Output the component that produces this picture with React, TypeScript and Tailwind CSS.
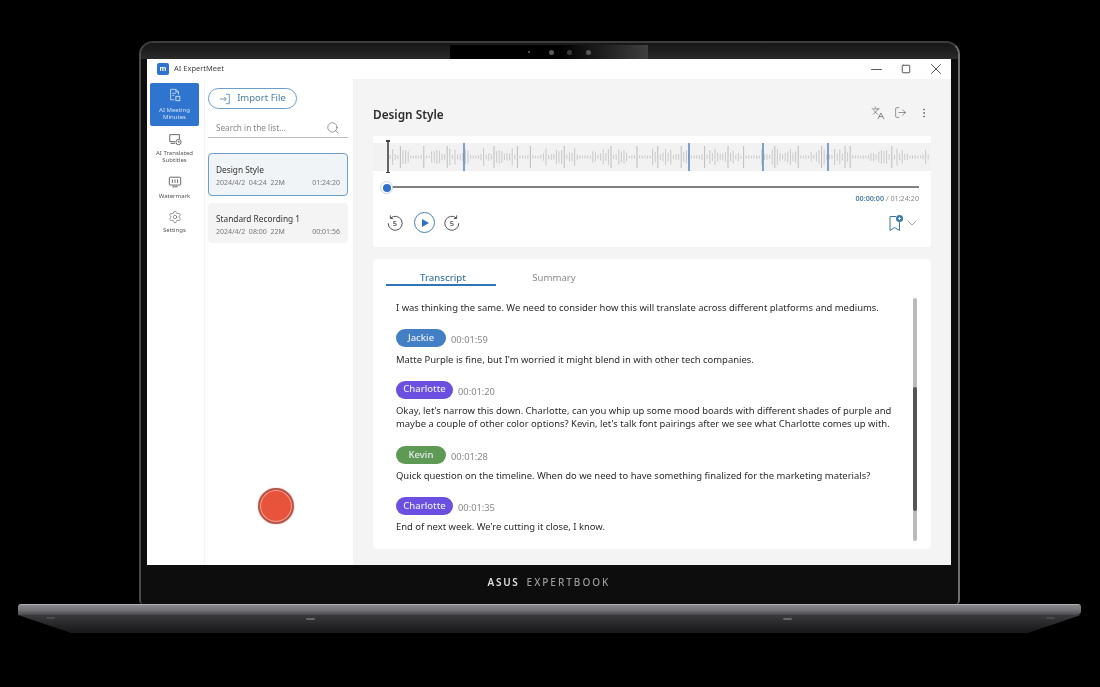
import React from "react";
import { Search, X, Minus, Square, Languages, LogOut, MoreVertical, ChevronDown, Settings } from "lucide-react";

const font = "font-['Noto_Sans','Open_Sans',sans-serif]";

function Wave() {
  const bars: React.ReactNode[] = [];
  const W = 542;
  for (let i = 0; i < 208; i++) {
    const x = 1 + i * 2.6;
    const phase = (x + 12) % 110;
    const quiet = (phase > 32 && phase < 54) || (phase > 92 && phase < 104);
    const noise = Math.abs(Math.sin(i * 1.7) * Math.cos(i * 0.53));
    let h = quiet ? 1.2 + noise * 0.8 : 2 + noise * 7;
    const tall = i % 9 === 4 && !quiet;
    if (tall || i % 41 === 13) h = 11;
    bars.push(
      <line key={i} x1={x} x2={x} y1={14 - h} y2={14 + h} stroke={tall || i % 41 === 13 ? "#a8a8a8" : "#b9b9b9"} strokeWidth="0.7" />,
    );
  }
  return (
    <svg viewBox={`0 0 ${W} 28`} className="h-[28px] w-[542px]">
      {bars}
      {[75, 300, 374, 439].map((x) => (
        <line key={x} x1={x} x2={x} y1="0" y2="28" stroke="#4a7fc0" strokeWidth="1.4" />
      ))}
    </svg>
  );
}

function SkipIcon({ flip }: { flip?: boolean }) {
  return (
    <svg viewBox="0 0 18 18" className="h-[18px] w-[18px]" fill="none" stroke="#555" strokeWidth="1">
      <g transform={flip ? "translate(18 0) scale(-1 1)" : undefined}>
        <path d="M4.6 4A7 7 0 1 1 2.2 9.2" />
        <path d="M4.4 1.4 4.2 4.4 7.2 4.6" />
      </g>
      <text x="9" y="12" textAnchor="middle" fontSize="7.5" fontWeight="600" fill="#555" stroke="none" fontFamily="Noto Sans">5</text>
    </svg>
  );
}

function NavItem({ label, icon, active, className }: { label: string[]; icon: React.ReactNode; active?: boolean; className?: string }) {
  return (
    <div className={`flex w-[49px] flex-col items-center rounded-[2px] ${active ? "h-[43px] bg-[#2f74cf] pt-[5px] text-[#cfe1f6]" : "text-[#555]"} ${className ?? ""}`}>
      {icon}
      <div className={`text-center text-[6px] leading-[7px] ${active ? "mt-[5px]" : "mt-[3.5px]"}`}>
        {label.map((l) => (
          <div key={l}>{l}</div>
        ))}
      </div>
    </div>
  );
}

function RecordingCard({ title, date, dur, active }: { title: string; date: string; dur: string; active?: boolean }) {
  return (
    <div className={`flex w-[140px] flex-col justify-center rounded-[4px] pt-[2px] ${active ? "h-[43px] border border-[#6c9ecb] bg-[#f1f4f7] pl-[7px] pr-[7px]" : "h-[40px] bg-[#f4f4f4] px-[8px]"}`}>
      <div className="text-[8.3px] leading-[13px] text-[#333]">{title}</div>
      <div className="mt-[1px] flex justify-between whitespace-pre text-[7px] leading-[11px] text-[#777]">
        <span>{date}</span>
        <span>{dur}</span>
      </div>
    </div>
  );
}

function Speaker({ name, time, color, width, mt, children }: { name: string; time: string; color: string; width: string; mt: string; children: React.ReactNode }) {
  return (
    <div className={mt}>
      <div className="flex h-[18px] items-center gap-[5px]">
        <div className={`flex h-[18px] items-center justify-center rounded-full text-[9.5px] font-medium text-[#e8ecf8] ${color} ${width}`}>{name}</div>
        <span className="pt-[4px] text-[9.3px] text-[#888]">{time}</span>
      </div>
      <div className="mt-[5.3px] whitespace-nowrap text-[9.45px] leading-[13.6px] text-[#2c2c2c]">{children}</div>
    </div>
  );
}

export default function App() {
  return (
    <div className={`flex h-[687px] w-[1100px] flex-col items-start overflow-hidden bg-black pt-[41px] ${font} blur-[0.35px]`}>
      {/* Lid */}
      <div className="relative ml-[139px] flex h-[563px] w-[821px] flex-col rounded-t-[14px] rounded-b-[4px] border-x-[2px] border-t-[2px] border-l-[#4a4a4a] border-r-[#6f6f6f] border-t-[#3d3d3d] bg-[#0d0d0d] pl-[6px] pr-[7px] pt-[16px]">
        <div className="absolute inset-x-0 top-0 h-[16px] rounded-t-[12px] bg-[linear-gradient(#161616,#2a2a2a)]" />
        {/* Camera strip */}
        <div className="absolute left-[309px] top-[2px] flex h-[14px] w-[198px] items-center bg-[linear-gradient(90deg,#000_55%,#3f3f3f_100%)]">
          <div className="ml-[78px] h-[2px] w-[2px] rounded-full bg-[#666]" />
          <div className="ml-[19px] h-[5px] w-[5px] rounded-full bg-[#5a5a5a]" />
          <div className="ml-[13px] h-[5px] w-[5px] rounded-full bg-[#3a3a3a]" />
          <div className="ml-[14px] h-[5px] w-[5px] rounded-full bg-[#5a5a5a]" />
        </div>
        <div className="relative flex h-[506px] flex-col bg-white">
          {/* Title bar */}
          <div className="flex h-[20px] shrink-0 items-center pl-[10px]">
            <div className="flex h-[12px] w-[12px] items-center justify-center rounded-[2px] bg-[#2f74cf] text-[7px] font-bold text-white">m</div>
            <span className="ml-[5px] text-[7.5px] text-[#444]">AI ExpertMeet</span>
            <div className="ml-auto flex items-center text-[#555]">
              <div className="flex w-[30px] justify-center"><Minus size={17} strokeWidth={1.4} /></div>
              <div className="flex w-[30px] justify-center"><Square size={10} strokeWidth={2.4} /></div>
              <div className="flex w-[30px] justify-center"><X size={18} strokeWidth={1.3} /></div>
            </div>
          </div>
          <div className="flex min-h-0 flex-1">
            {/* Sidebar */}
            <div className="flex w-[58px] shrink-0 flex-col items-start border-r border-[#f4f4f4] pl-[3px] pt-[4px]">
              <NavItem
                active
                label={["AI Meeting", "Minutes"]}
                icon={
                  <svg viewBox="0 0 16 16" className="h-[14px] w-[14px]" fill="none" stroke="#cfe1f6" strokeWidth="1">
                    <path d="M3 1.5h6l3 3v3M3 1.5v12h4M9 1.5v3h3M5 6h4M5 8.5h2" />
                    <rect x="9" y="9.5" width="4.5" height="5" />
                  </svg>
                }
              />
              <NavItem
                className="mt-[6px]"
                label={["AI Translated", "Subtitles"]}
                icon={
                  <svg viewBox="0 0 16 16" className="h-[14px] w-[14px]" fill="none" stroke="#555" strokeWidth="1">
                    <path d="M8 11H2V3h11v5M3 13h5" />
                    <circle cx="12" cy="11.5" r="3" />
                    <path d="M12 10v1.6h1.4" />
                  </svg>
                }
              />
              <NavItem
                className="mt-[11.5px]"
                label={["Watermark"]}
                icon={
                  <svg viewBox="0 0 16 16" className="h-[14px] w-[14px]" fill="none" stroke="#555" strokeWidth="1">
                    <rect x="1.5" y="2.5" width="13" height="9" rx="1" />
                    <path d="M5 13.5h6M5 5v4M8 5v4M11 5v4" />
                  </svg>
                }
              />
              <NavItem className="mt-[10px]" label={["Settings"]} icon={<Settings size={14} strokeWidth={1} />} />
            </div>
            {/* List */}
            <div className="flex w-[148px] shrink-0 flex-col items-start pl-[3px] pt-[9px]">
              <div className="flex h-[21px] w-[89px] items-center justify-center gap-[6px] rounded-full border border-[#6c9ecb] text-[9.5px] text-[#4a7ea8]">
                <svg viewBox="0 0 14 14" className="h-[12px] w-[12px]" fill="none" stroke="#4a7ea8" strokeWidth="0.9">
                  <path d="M1 7h7M6 4.5 8.5 7 6 9.5M8 1.5h4v11H8" />
                </svg>
                Import File
              </div>
              <div className="mt-[8px] flex h-[21px] w-[140px] items-center justify-between border-b border-[#bbb] pl-[8px] pr-[8px] pt-[2px] text-[8.2px] text-[#888]">
                <span>Search in the list...</span>
                <Search size={14} strokeWidth={1} className="text-[#555]" />
              </div>
              <div className="mt-[15px] flex flex-col gap-[7px]">
                <RecordingCard active title="Design Style" date="2024/4/2  04:24  22M" dur="01:24:20" />
                <RecordingCard title="Standard Recording 1" date="2024/4/2  08:00  22M" dur="00:01:56" />
              </div>
              <div className="ml-[50px] mt-[245px] h-[36px] w-[36px] rounded-full border-[2px] border-[#b5574a] bg-[#e8533c] shadow-[inset_0_0_0_1px_#f7a593,0_0_2px_#f3b5aa]" />
            </div>
            {/* Main */}
            <div className="flex min-w-0 flex-1 flex-col bg-[#f4f4f4] px-[20px]">
              <div className="flex h-[57px] shrink-0 items-center justify-between pt-[14px]">
                <span className="text-[11.8px] font-semibold text-[#2c2c2c]">Design Style</span>
                <div className="-mr-[4px] mb-[4px] flex items-center text-[#555]">
                  <div className="flex w-[23px] justify-center"><Languages size={14} strokeWidth={1.1} /></div>
                  <div className="flex w-[23px] justify-center"><LogOut size={13} strokeWidth={1.1} /></div>
                  <div className="flex w-[23px] justify-center"><MoreVertical size={12} strokeWidth={1.4} /></div>
                </div>
              </div>
              {/* Player */}
              <div className="h-[111px] shrink-0 rounded-[3px] bg-white pt-[7px]">
                <div className="relative h-[28px] bg-[#f2f2f2] pl-[16px]">
                  <Wave />
                  <div className="absolute -top-[3px] left-[14px] h-[33px] w-[1.5px] bg-[#666]" />
                  <div className="absolute -top-[3px] left-[13px] h-[1.5px] w-[4px] bg-[#444]" />
                  <div className="absolute -bottom-[2px] left-[13px] h-[1.5px] w-[4px] bg-[#444]" />
                </div>
                <div className="relative mx-[14px] mt-[15px] h-[2px] w-[532px] bg-[#808080]">
                  <div className="absolute -left-[7px] -top-[5px] flex h-[13px] w-[13px] items-center justify-center rounded-full border border-[#c4d6ec] bg-white">
                    <div className="h-[8px] w-[8px] rounded-full bg-[#2f6fc9]" />
                  </div>
                </div>
                <div className="mr-[12px] mt-[6px] text-right text-[7.2px] leading-[9px] text-[#888]">
                  <span className="font-semibold text-[#4a7ea8]">00:00:00</span> / 01:24:20
                </div>
                <div className="mt-[9px] flex items-center pl-[13px] pr-[11px]">
                  <SkipIcon />
                  <div className="ml-[10px] flex h-[21px] w-[21px] items-center justify-center rounded-full border border-[#4a7ea8]">
                    <div className="ml-[2px] h-0 w-0 border-y-[4.5px] border-l-[7px] border-y-transparent border-l-[#2f6fc9]" />
                  </div>
                  <div className="ml-[8px]">
                    <SkipIcon flip />
                  </div>
                  <div className="ml-auto flex items-center">
                    <svg viewBox="0 0 16 18" className="h-[18px] w-[16px]" fill="none" stroke="#3a78a8" strokeWidth="1">
                      <path d="M8 2.5H2v14l4.5-3 5 3V8" />
                      <circle cx="11.5" cy="4.5" r="3.5" fill="#3a78a8" stroke="none" />
                      <path d="M11.5 2.8v3.4M9.8 4.5h3.4" stroke="#fff" strokeWidth="0.8" />
                    </svg>
                    <ChevronDown size={16} strokeWidth={1} className="text-[#777]" />
                  </div>
                </div>
              </div>
              {/* Transcript */}
              <div className="relative mt-[12px] h-[290px] shrink-0 rounded-[3px] bg-white pl-[13px]">
                <div className="flex h-[27px] items-end">
                  <div className="h-[19px] w-[110px] border-b-[2px] border-[#2f74b5] pl-[4px] pt-[3px] text-center text-[9.6px] font-medium leading-[16px] text-[#3a78a8]">Transcript</div>
                  <div className="ml-[4px] h-[19px] w-[108px] pt-[3px] text-center text-[9.6px] leading-[16px] text-[#888]">Summary</div>
                </div>
                <div className="pl-[10px]">
                  <div className="mt-[14.5px] whitespace-nowrap text-[9.45px] leading-[13.6px] text-[#2c2c2c]">
                    I was thinking the same. We need to consider how this will translate across different platforms and mediums.
                  </div>
                  <Speaker mt="mt-[15.2px]" name="Jackie" time="00:01:59" color="bg-[#437fc4]" width="w-[50px]">
                    Matte Purple is fine, but I'm worried it might blend in with other tech companies.
                  </Speaker>
                  <Speaker mt="mt-[14.4px]" name="Charlotte" time="00:01:20" color="bg-[#6b4fe0]" width="w-[57px]">
                    <div>Okay, let's narrow this down. Charlotte, can you whip up some mood boards with different shades of purple and</div>
                    <div>maybe a couple of other color options? Kevin, let's talk font pairings after we see what Charlotte comes up with.</div>
                  </Speaker>
                  <Speaker mt="mt-[14.8px]" name="Kevin" time="00:01:28" color="bg-[#5f9a55]" width="w-[50px]">
                    Quick question on the timeline. When do we need to have something finalized for the marketing materials?
                  </Speaker>
                  <Speaker mt="mt-[14.4px]" name="Charlotte" time="00:01:35" color="bg-[#6b4fe0]" width="w-[57px]">
                    End of next week. We're cutting it close, I know.
                  </Speaker>
                </div>
                <div className="absolute right-[14px] top-[39px] h-[243px] w-[4px] rounded-full bg-[#bbb]">
                  <div className="mt-[89px] h-[124px] w-[4px] rounded-full bg-[#555]" />
                </div>
              </div>
            </div>
          </div>
        </div>
        {/* Bottom bezel */}
        <div className="relative flex flex-1 items-center justify-center pb-[5px] text-[10px] font-semibold tracking-[1.7px]">
          <span className="text-[#dcdcdc]">ASUS</span>
          <span className="ml-[7px] font-medium tracking-[2px] text-[#9a9a9a]">EXPERTBOOK</span>
        </div>
      </div>
      {/* Base */}
      <div className="relative ml-[18px] h-[29px] w-[1063px]">
        <div className="h-[11px] rounded-tl-[3px] rounded-tr-[3px] rounded-br-[4px] bg-[linear-gradient(#c4c4c8_0,#85858a_14%,#737378_55%,#4a4a4e_100%)]" />
        <div className="h-[18px] w-full bg-[linear-gradient(#3a3a3d,#1a1a1c_90%)] [clip-path:polygon(0_0,100%_0,95%_100%,5%_100%)]" />
        <div className="absolute left-[288px] top-[14px] h-[2px] w-[9px] rounded-full bg-[#666]" />
        <div className="absolute left-[765px] top-[14px] h-[2px] w-[9px] rounded-full bg-[#666]" />
        <div className="absolute left-[28px] top-[13px] h-[2px] w-[9px] rounded-full bg-[#4a4a4a]" />
        <div className="absolute right-[26px] top-[13px] h-[2px] w-[9px] rounded-full bg-[#4a4a4a]" />
      </div>
    </div>
  );
}
